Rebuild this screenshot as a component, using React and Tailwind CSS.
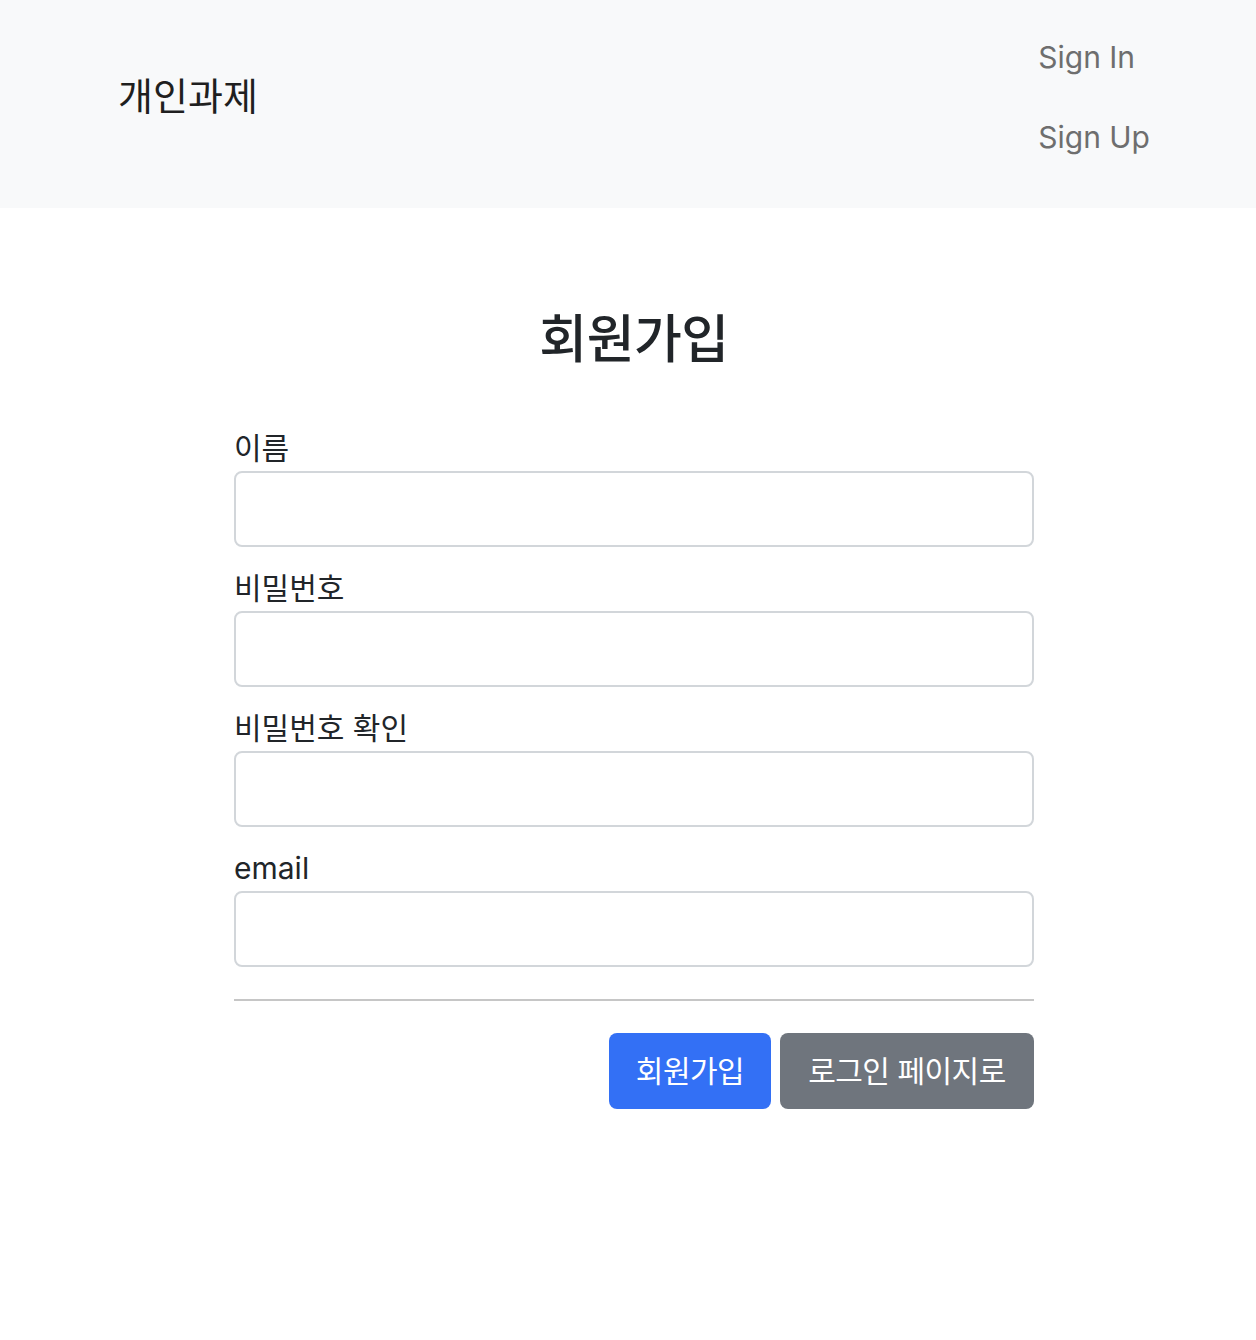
import React from 'react'

const fields = [
  { id: 'name', label: '이름', type: 'text' },
  { id: 'password', label: '비밀번호', type: 'password' },
  { id: 'password2', label: '비밀번호 확인', type: 'password' },
  { id: 'email', label: 'email', type: 'email' },
]

const font = "font-['Inter','Noto_Sans_CJK_KR',sans-serif]"

export default function App() {
  return (
    <div className={`min-h-[1340px] bg-white text-[#212529] ${font}`}>
      <nav className="h-[208px] bg-[#f8f9fa]">
        <div className="flex h-full items-start justify-between pl-[118px] pr-[106px]">
          <span className="mt-[77px] text-[38px] leading-[38px] text-[#1f1f1f]">개인과제</span>
          <ul className="mt-[17px] flex flex-col">
            <li>
              <a href="#" className="block h-[80px] text-[30px] leading-[80px] text-[#6e6e6e]">Sign In</a>
            </li>
            <li>
              <a href="#" className="block h-[80px] text-[30px] leading-[80px] text-[#6e6e6e]">Sign Up</a>
            </li>
          </ul>
        </div>
      </nav>

      <main className="mx-auto w-[800px] translate-x-[6px] pt-[102px]">
        <h2 className="text-center text-[52px] font-medium leading-[60px] tracking-[-0.5px]">회원가입</h2>

        <form className="mt-[55px] flex flex-col gap-[18px]">
          {fields.map((f) => (
            <div key={f.id}>
              <label htmlFor={f.id} className="block h-[46px] text-[30px] leading-[46px]">
                {f.label}
              </label>
              <input
                id={f.id}
                type={f.type}
                className="block h-[76px] w-full rounded-[8px] border-2 border-[#d2d6da] bg-white px-[24px] text-[30px] outline-none"
              />
            </div>
          ))}

          <hr className="mt-[14px] border-t-2 border-[#c6c6c6]" />

          <div className="mt-[14px] flex justify-end gap-[9px]">
            <button
              type="submit"
              className="h-[76px] w-[162px] rounded-[8px] bg-[#3370f5] text-[30px] tracking-[-0.5px] text-white"
            >
              회원가입
            </button>
            <button
              type="button"
              className="h-[76px] w-[254px] rounded-[8px] bg-[#6f757d] text-[30px] tracking-[-0.5px] text-white"
            >
              로그인 페이지로
            </button>
          </div>
        </form>
      </main>
    </div>
  )
}
